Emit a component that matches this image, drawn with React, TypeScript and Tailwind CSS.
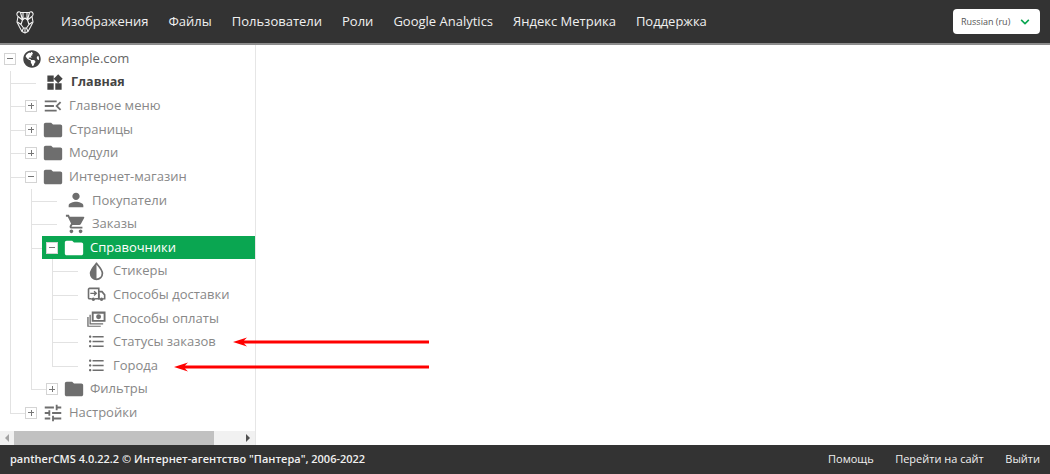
import React from "react";
import { FaGlobeAmericas, FaChevronDown } from "react-icons/fa";
import { MdWidgets, MdMenuOpen, MdFolder, MdPerson, MdShoppingCart, MdFormatListBulleted, MdTune } from "react-icons/md";

type IconT = React.ComponentType<{ className?: string }>;
type N = {
  label: string;
  icon: IconT;
  big?: boolean;
  open?: boolean;
  leaf?: boolean;
  bold?: boolean;
  active?: boolean;
  root?: boolean;
  children?: N[];
};

const Drop: IconT = ({ className }) => (
  <svg viewBox="0 0 20 20" width="1em" height="1em" className={className} fill="none">
    <path d="M10 1.5 C6.5 5.5 3.8 8.4 3.8 12 C3.8 15.6 6.6 18.3 10 18.3 C13.4 18.3 16.2 15.6 16.2 12 C16.2 8.4 13.5 5.5 10 1.5 Z" stroke="currentColor" strokeWidth="1.8" />
    <path d="M10 1.5 C6.5 5.5 3.8 8.4 3.8 12 C3.8 15.6 6.6 18.3 10 18.3 Z" fill="currentColor" />
  </svg>
);

const Truck: IconT = ({ className }) => (
  <svg viewBox="0 0 20 20" width="1em" height="1em" className={className} fill="none" stroke="currentColor">
    <path d="M5 14.5 H2.6 A1 1 0 0 1 1.6 13.5 V4.6 A1 1 0 0 1 2.6 3.6 H12.4 V14.5 H8.5" strokeWidth="1.7" />
    <path d="M12.4 7 H15.8 L18.6 10.4 V14.5 H17 M12.4 9 V14.5 H13.6" strokeWidth="1.7" />
    <path d="M3.5 8.8 H9.5 M7.4 6.6 L9.8 8.8 L7.4 11" strokeWidth="1.4" />
    <circle cx="6.7" cy="15" r="1.8" fill="currentColor" stroke="none" />
    <circle cx="15.3" cy="15" r="1.8" fill="currentColor" stroke="none" />
  </svg>
);

const Payments: IconT = ({ className }) => (
  <svg viewBox="0 0 20 20" width="1em" height="1em" className={className} fill="currentColor">
    <path fillRule="evenodd" d="M5 2.5 H19.5 V13.5 H5 Z M7 5 V11.5 H17.5 V5 Z" />
    <circle cx="12.2" cy="8.2" r="2.6" />
    <path d="M2.6 6 H4 V15 H17 V16.3 H2.6 Z" />
    <path d="M0.3 8.5 H1.7 V17.5 H14.5 V18.8 H0.3 Z" />
  </svg>
);

const list = MdFormatListBulleted;
const tree: N = {
  label: "example.com",
  icon: FaGlobeAmericas,
  open: true,
  root: true,
  children: [
    { label: "Главная", icon: MdWidgets, leaf: true, bold: true },
    { label: "Главное меню", icon: MdMenuOpen, big: true },
    { label: "Страницы", icon: MdFolder, big: true },
    { label: "Модули", icon: MdFolder, big: true },
    {
      label: "Интернет-магазин",
      icon: MdFolder,
      big: true,
      open: true,
      children: [
        { label: "Покупатели", icon: MdPerson, leaf: true, big: true },
        { label: "Заказы", icon: MdShoppingCart, leaf: true, big: true },
        {
          label: "Справочники",
          icon: MdFolder,
          big: true,
          open: true,
          active: true,
          children: [
            { label: "Стикеры", icon: Drop, leaf: true },
            { label: "Способы доставки", icon: Truck, leaf: true },
            { label: "Способы оплаты", icon: Payments, leaf: true },
            { label: "Статусы заказов", icon: list, leaf: true },
            { label: "Города", icon: list, leaf: true },
          ],
        },
        { label: "Фильтры", icon: MdFolder, big: true },
      ],
    },
    { label: "Настройки", icon: MdTune, big: true },
  ],
};

function Expander({ open }: { open?: boolean }) {
  return (
    <span className="relative z-10 ml-1 flex h-3 w-3 shrink-0 items-center justify-center border border-[#d4d4d4] bg-white">
      <span className="absolute h-px w-[6px] bg-[#777]" />
      {!open && <span className="absolute h-[6px] w-px bg-[#777]" />}
    </span>
  );
}

function Node({ node, last }: { node: N; last?: boolean }) {
  const Icon = node.icon;
  return (
    <li className="relative">
      {!node.root && (
        <>
          <span className={`absolute left-[-11px] top-0 w-px bg-[#e2e2e2] ${last ? "h-3" : "h-full"}`} />
          <span className={`absolute left-[-11px] top-3 h-px bg-[#e2e2e2] ${node.leaf ? "w-[26px]" : "w-4"}`} />
        </>
      )}
      <div className={`relative flex h-[23.6px] items-center ${node.active ? "bg-[#0aa651] text-white" : node.bold ? "text-[#444]" : node.root ? "text-[#666]" : "text-[#888]"}`}>
        {node.leaf ? <span className="w-[24px] shrink-0" /> : <Expander open={node.open} />}
        <span className={`flex w-[19px] shrink-0 justify-center ${node.leaf ? "" : "ml-[6px]"}`}>
          <Icon className={`shrink-0 ${node.big ? "text-[22px]" : node.root ? "text-[18px]" : "text-[19px]"} ${node.active ? "text-white" : node.root || node.bold ? "text-[#444]" : "text-[#6e6e6e]"}`} />
        </span>
        <span className={`ml-[7px] whitespace-nowrap ${node.bold ? "text-[12.5px] font-bold" : "text-[13px]"}`}>{node.label}</span>
      </div>
      {node.children && (
        <ul className="relative ml-[21px]">
          {node.children.map((c, i) => (
            <Node key={c.label} node={c} last={i === node.children!.length - 1} />
          ))}
        </ul>
      )}
    </li>
  );
}

function Arrow({ width }: { width: number }) {
  return (
    <svg width={width} height="10" viewBox={`0 0 ${width} 10`} className="block">
      <path d={`M0 5 L14 0.5 L11 3.5 H${width} V6.5 H11 L14 9.5 Z`} fill="#f00" />
    </svg>
  );
}

export default function App() {
  const nav = ["Изображения", "Файлы", "Пользователи", "Роли", "Google Analytics", "Яндекс Метрика", "Поддержка"];
  return (
    <div className="flex h-[474px] w-[1050px] flex-col overflow-hidden bg-white font-['Open_Sans',sans-serif]">
      <header className="flex h-[45px] shrink-0 items-center border-b-2 border-[#8c8c8c] bg-[#333] pl-[13px] pr-[10px]">
        <svg width="24" height="24" viewBox="0 0 24 24" fill="none" stroke="#f2f2f2" strokeWidth="1.1" strokeLinejoin="round">
          <path d="M4 3.5 A2 2 0 0 1 7.5 2.5 H16.5 A2 2 0 0 1 20 3.5 C20.5 5 19.8 6 19 6.5 L20 12 L17.5 17 L15 21.5 L12 23 L9 21.5 L6.5 17 L4 12 L5 6.5 C4.2 6 3.5 5 4 3.5 Z" />
          <path d="M7.5 2.5 L9.5 10 L12 8 L14.5 10 L16.5 2.5 M10 2.5 V10 M14 2.5 V10 M5 6.5 L9.5 10 L8 14.5 L4.5 12 M19 6.5 L14.5 10 L16 14.5 L19.5 12 M8 14.5 L10.5 18 H13.5 L16 14.5 M9 21.5 L10.5 18 M15 21.5 L13.5 18 M12 18 V23" />
        </svg>
        <nav className="ml-[24px] flex items-center gap-[20px] text-[13px] font-medium text-[#f0f0f0]">
          {nav.map((n) => (
            <span key={n} className="whitespace-nowrap">{n}</span>
          ))}
        </nav>
        <div className="ml-auto flex h-[25px] w-[87px] items-center justify-between rounded bg-white pl-2 pr-[10px] text-[9px] text-[#555]">
          <span>Russian (ru)</span>
          <FaChevronDown className="text-[10px] text-[#0aa651]" />
        </div>
      </header>

      <main className="relative flex min-h-0 flex-1">
        <aside className="flex w-[256px] shrink-0 flex-col border-r border-[#e6e6e6]">
          <div className="min-h-0 flex-1 pt-[2px]">
            <ul>
              <Node node={tree} />
            </ul>
          </div>
          <div className="flex h-[14px] shrink-0 items-center bg-[#f1f1f1]">
            <span className="flex w-[14px] justify-center">
              <span className="h-0 w-0 border-y-[4px] border-r-[4px] border-y-transparent border-r-[#a3a3a3]" />
            </span>
            <span className="h-full w-[200px] bg-[#c1c1c1]" />
            <span className="ml-auto flex w-[14px] justify-center">
              <span className="h-0 w-0 border-y-[4px] border-l-[4px] border-y-transparent border-l-[#505050]" />
            </span>
          </div>
        </aside>
        <div className="absolute left-[233px] top-[292px]"><Arrow width={196} /></div>
        <div className="absolute left-[174px] top-[317px]"><Arrow width={255} /></div>
      </main>

      <footer className="flex h-[29px] shrink-0 items-center justify-between bg-[#333] pl-[10px] pr-[10px] text-[11px] font-semibold text-[#f0f0f0]">
        <span>pantherCMS 4.0.22.2 © Интернет-агентство "Пантера", 2006-2022</span>
        <span className="flex gap-[21.5px] font-medium">
          <span>Помощь</span>
          <span>Перейти на сайт</span>
          <span>Выйти</span>
        </span>
      </footer>
    </div>
  );
}
